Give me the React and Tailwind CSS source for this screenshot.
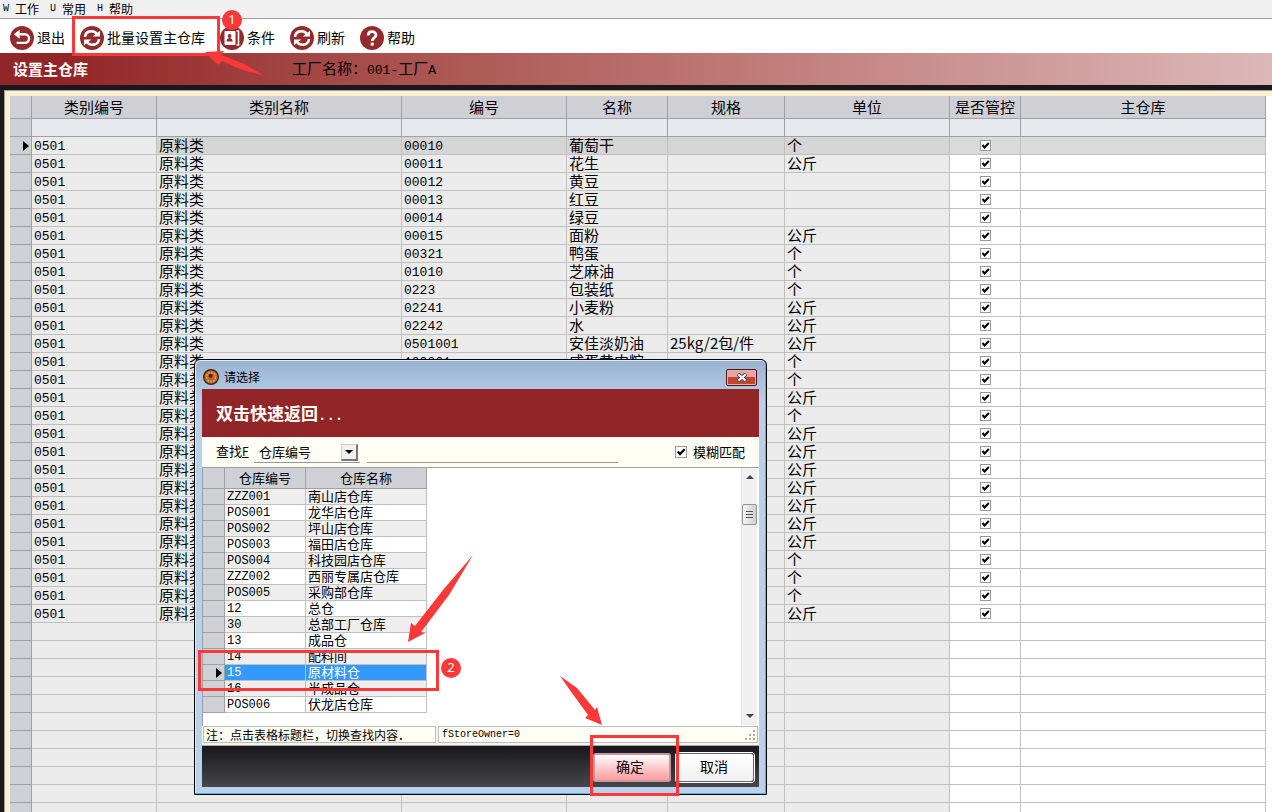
import React from 'react';

const columns = [
  { title: '类别编号', width: 'w-[125px]' },
  { title: '类别名称', width: 'w-[245px]' },
  { title: '编号', width: 'w-[165px]' },
  { title: '名称', width: 'w-[101px]' },
  { title: '规格', width: 'w-[117px]' },
  { title: '单位', width: 'w-[165px]' },
  { title: '是否管控', width: 'w-[71px]' },
  { title: '主仓库', width: '' },
];

// [编号, 名称, 规格, 单位]
const items = [
  ['00010', '葡萄干', '', '个'],
  ['00011', '花生', '', '公斤'],
  ['00012', '黄豆', '', ''],
  ['00013', '红豆', '', ''],
  ['00014', '绿豆', '', ''],
  ['00015', '面粉', '', '公斤'],
  ['00321', '鸭蛋', '', '个'],
  ['01010', '芝麻油', '', '个'],
  ['0223', '包装纸', '', '个'],
  ['02241', '小麦粉', '', '公斤'],
  ['02242', '水', '', '公斤'],
  ['0501001', '安佳淡奶油', '25kg/2包/件', '公斤'],
  ['100361', '咸蛋黄肉粽', '', '个'],
  ['', '', '', '个'],
  ['', '', '', '公斤'],
  ['', '', '', '个'],
  ['', '', '', '公斤'],
  ['', '', '', '公斤'],
  ['', '', '', '公斤'],
  ['', '', '', '公斤'],
  ['', '', '', '公斤'],
  ['', '', '', '公斤'],
  ['', '', '', '公斤'],
  ['', '', '', '个'],
  ['', '', '', '个'],
  ['', '', '', '个'],
  ['', '', '', '公斤'],
];

const emptyRows = Array.from({ length: 11 });

const warehouses = [
  ['ZZZ001', '南山店仓库'],
  ['POS001', '龙华店仓库'],
  ['POS002', '坪山店仓库'],
  ['POS003', '福田店仓库'],
  ['POS004', '科技园店仓库'],
  ['ZZZ002', '西丽专属店仓库'],
  ['POS005', '采购部仓库'],
  ['12', '总仓'],
  ['30', '总部工厂仓库'],
  ['13', '成品仓'],
  ['14', '配料间'],
  ['15', '原材料仓'],
  ['16', '半成品仓'],
  ['POS006', '伏龙店仓库'],
];

const SELECTED = '15';

const RoundIcon = ({ children }) => (
  <svg viewBox="0 0 24 24" className="h-6 w-6 shrink-0">
    <circle cx="12" cy="12" r="12" fill="#932b2d" />
    {children}
  </svg>
);

const ExitIcon = () => (
  <RoundIcon>
    <path d="M8 8.3h6.8a4.3 4.3 0 0 1 0 8.6H6.6" fill="none" stroke="#fff" strokeWidth="2.4" />
    <path d="M3.8 8.3 9.6 3.8v9z" fill="#fff" />
  </RoundIcon>
);

const RefreshIcon = () => (
  <RoundIcon>
    <path d="M5 11C5.6 4.6 13.4 3.4 17 8" fill="none" stroke="#fff" strokeWidth="2.6" />
    <path d="M12.6 10.6h7.4V4.8z" fill="#fff" />
    <path d="M19 13c-.6 6.4-8.4 7.6-12 3" fill="none" stroke="#fff" strokeWidth="2.6" />
    <path d="M11.4 13.4H4v5.8z" fill="#fff" />
  </RoundIcon>
);

const BookIcon = () => (
  <RoundIcon>
    <rect x="4.5" y="5" width="11" height="14" rx="1" fill="#fff" />
    <path d="M16.5 5h2v14h-2" fill="none" stroke="#fff" strokeWidth="1.6" />
    <circle cx="9.6" cy="10" r="1.9" fill="#932b2d" />
    <path d="M6.6 15.4c0-4.4 6-4.4 6 0z" fill="#932b2d" />
  </RoundIcon>
);

const HelpIcon = () => (
  <RoundIcon>
    <path d="M8.2 9.4c0-5 7.8-4.8 7.8-.4 0 3-3.8 2.8-3.8 6" fill="none" stroke="#fff" strokeWidth="2.8" />
    <rect x="10.7" y="16.6" width="3" height="3" fill="#fff" />
  </RoundIcon>
);

const toolbar = [
  { label: '退出', Icon: ExitIcon },
  { label: '批量设置主仓库', Icon: RefreshIcon },
  { label: '条件', Icon: BookIcon },
  { label: '刷新', Icon: RefreshIcon },
  { label: '帮助', Icon: HelpIcon },
];

const CheckBox = ({ id, label, size = 'h-[11px] w-[11px]' }) => (
  <span className={`inline-grid align-top ${size}`}>
    <input
      id={id}
      type="checkbox"
      defaultChecked
      aria-label={label}
      className={`col-start-1 row-start-1 appearance-none border border-[#999] bg-white ${size}`}
    />
    <svg viewBox="0 0 11 11" className={`pointer-events-none col-start-1 row-start-1 ${size}`}>
      <path d="M2.5 5 4.6 7.4 8.8 3" fill="none" stroke="#000" strokeWidth="2" />
    </svg>
  </span>
);

const RowPointer = () => (
  <svg viewBox="0 0 6 10" className="ml-auto mr-[2px] h-[10px] w-[6px]">
    <path d="M0 0 6 5 0 10z" fill="#000" />
  </svg>
);

const headCell = 'border-b border-r border-[#a0a0a0] bg-[#cfd0d6] px-0 pt-0 font-normal';
const cell = 'border-b border-r border-[#c0c0c0] px-[2px] py-0 whitespace-nowrap align-top';
const codeCell = 'border-b border-r border-[#c0c0c0] px-[2px] py-0 whitespace-nowrap align-bottom';
const code = "font-['Liberation_Mono','Noto_Sans_CJK_SC',monospace]";

const ItemTable = () => (
  <table className="w-full table-fixed border-separate border-spacing-0 text-[15px] leading-[15px]">
    <thead>
      <tr className="h-[23px]">
        <th className={`${headCell} w-[22px]`}></th>
        {columns.map((col) => (
          <th key={col.title} className={`${headCell} pb-[2px] ${col.width}`}>{col.title}</th>
        ))}
      </tr>
      <tr className="h-[18px]">
        <td className={headCell}></td>
        {columns.map((col) => (
          <td key={col.title} className="border-b border-r border-[#a0a0a0] bg-[#e6e9ee] p-0"></td>
        ))}
      </tr>
    </thead>
    <tbody>
      {items.map(([no, name, spec, unit], i) => {
        const gray = i === 0 ? 'bg-[#d5d5d5]' : 'bg-[#ebebeb]';
        const white = i === 0 ? 'bg-[#dadada]' : 'bg-white';
        return (
          <tr key={i} className="h-[18px]">
            <td className={headCell}>{i === 0 && <RowPointer />}</td>
            <td className={`${codeCell} ${code} bg-[#ebebeb] text-[13px]`}>0501</td>
            <td className={`${cell} ${gray}`}>原料类</td>
            <td className={`${codeCell} ${code} ${gray} text-[13px]`}>{no}</td>
            <td className={`${cell} ${gray}`}>{name}</td>
            <td className={`${cell} ${gray}`}>{spec}</td>
            <td className={`${cell} ${gray}`}>{unit}</td>
            <td className={`${cell} ${white}`}>
              <div className="flex justify-center pt-[3px]">
                <CheckBox label="是否管控" />
              </div>
            </td>
            <td className={`${cell} ${white}`}></td>
          </tr>
        );
      })}
      {emptyRows.map((_, i) => (
        <tr key={i} className="h-[18px]">
          <td className={headCell}></td>
          {columns.map((col, c) => (
            <td key={col.title} className={`${cell} ${c < 6 ? 'bg-[#ebebeb]' : 'bg-white'}`}></td>
          ))}
        </tr>
      ))}
    </tbody>
  </table>
);

const WarehouseTable = () => (
  <table className="w-[224px] table-fixed border-separate border-spacing-0 self-start text-[13px] leading-[13px]">
    <thead>
      <tr className="h-[21px]">
        <th className={`${headCell} w-[22px]`}></th>
        <th className={`${headCell} w-[81px] pb-[2px]`}>仓库编号</th>
        <th className={`${headCell} pb-[2px]`}>仓库名称</th>
      </tr>
    </thead>
    <tbody>
      {warehouses.map(([no, name], i) => {
        const selected = no === SELECTED;
        const tone = selected
          ? 'bg-[#3399ff] text-white'
          : i % 2 === 0 ? 'bg-[#eeeeee]' : 'bg-white';
        return (
          <tr key={no} className="h-4">
            <td className={headCell}>{selected && <RowPointer />}</td>
            <td className={`${codeCell} ${code} ${tone} text-[12px]`}>{no}</td>
            <td className={`${cell} ${tone}`}>{name}</td>
          </tr>
        );
      })}
    </tbody>
  </table>
);

const ScrollBar = () => (
  <div className="flex w-4 flex-col items-center border-l border-[#e4e4e4] bg-[#f0f0f0]">
    <svg viewBox="0 0 8 4" className="mt-[7px] h-1 w-2"><path d="M0 4 4 0 8 4z" fill="#444" /></svg>
    <div className="mt-[25px] flex h-[21px] w-[15px] flex-col items-center justify-center gap-[2px] rounded-xs border border-[#969696] bg-linear-to-r from-[#f6f6f6] to-[#cfcfcf]">
      <span className="h-px w-[7px] bg-[#555]"></span>
      <span className="h-px w-[7px] bg-[#555]"></span>
      <span className="h-px w-[7px] bg-[#555]"></span>
    </div>
    <svg viewBox="0 0 8 4" className="mb-[7px] mt-auto h-1 w-2"><path d="M0 0 4 4 8 0z" fill="#444" /></svg>
  </div>
);

const SelectDialog = () => (
  <div
    role="dialog"
    aria-label="请选择"
    className="absolute left-[194px] top-[359px] w-[573px] rounded-t-md border border-black bg-linear-to-b from-[#99b3d0] via-[#b9d1ea] via-10% to-[#bcd0ea] px-[7px] pb-[7px] shadow-[inset_-1px_-1px_0_#35c3e0,inset_1px_1px_0_#dfeaf6]"
  >
    <div className="flex h-[29px] items-center pr-[2px]">
      <svg viewBox="0 0 16 16" className="ml-px mt-1 h-4 w-4">
        <circle cx="8" cy="8" r="7.3" fill="#b8692a" stroke="#4a2108" strokeWidth="1.4" />
        <circle cx="8" cy="8" r="4.6" fill="none" stroke="#dca064" strokeWidth="1.6" strokeDasharray="2 1" />
        <circle cx="7.6" cy="6.8" r="2" fill="#7a0d0d" />
      </svg>
      <h2 className="ml-[5px] mt-1 text-[12px] leading-4">请选择</h2>
      <button
        aria-label="关闭"
        className="ml-auto mt-[6px] flex h-[17px] w-[31px] items-center justify-center rounded-xs border border-[#4c1420] bg-linear-to-b from-[#e9a59c] from-50% to-[#c14630] to-50% shadow-[inset_0_0_0_1px_#e8b0a8]"
      >
        <svg viewBox="0 0 12 9" className="h-[9px] w-3">
          <path d="M2 1 10 8M10 1 2 8" stroke="#4e5468" strokeWidth="4" />
          <path d="M2.5 1.5 9.5 7.5M9.5 1.5 2.5 7.5" stroke="#fff" strokeWidth="2.2" />
        </svg>
      </button>
    </div>

    <div className="flex h-12 items-center bg-[#922527] px-[14px] text-[17px] font-bold text-white">
      <p>双击快速返回<span className={`${code} text-[14px]`}>...</span></p>
    </div>

    <div className="flex h-[30px] bg-[#fffef5] pl-[14px] pr-[14px] text-[13px]">
      <label htmlFor="field" className="w-[38px] leading-[28px] whitespace-nowrap">
        查找<u className="text-[12px]">F</u>
      </label>
      <div className="grid h-[26px] w-[106px] border-b border-[#999]">
        <select id="field" className="col-start-1 row-start-1 appearance-none bg-transparent pl-[5px] pt-1">
          <option>仓库编号</option>
        </select>
        <span className="pointer-events-none col-start-1 row-start-1 mr-[2px] mt-[7px] flex h-[17px] w-[17px] items-center justify-center justify-self-end border-b-2 border-r-2 border-l border-t border-b-[#777] border-l-[#ccc] border-r-[#777] border-t-[#ccc] bg-[#f0f0f0]">
          <svg viewBox="0 0 8 4" className="h-1 w-2"><path d="M0 0 4 4 8 0z" fill="#000" /></svg>
        </span>
      </div>
      <input type="text" aria-label="查找内容" className="ml-[7px] h-[26px] w-[251px] border-b border-[#999] bg-transparent" />
      <label htmlFor="fuzzy" className="ml-auto flex items-center gap-[6px]">
        <CheckBox id="fuzzy" size="h-3 w-3" />
        模糊匹配
      </label>
    </div>

    <div className="flex h-[259px] justify-between border-l border-t border-[#a0a0a0] bg-white pb-px pr-[2px]">
      <WarehouseTable />
      <ScrollBar />
    </div>

    <div className="flex h-5 gap-[2px] border-b border-[#aaa] bg-[#f6f5ec] pb-[2px] pl-px pr-px text-[12px] leading-[15px]">
      <div className="w-[233px] border border-[#bbb] bg-[#fffef5] px-[2px] whitespace-nowrap">
        注：点击表格标题栏，切换查找内容．
      </div>
      <div className={`${code} flex flex-1 items-end justify-between border border-[#bbb] bg-[#fffef5] pl-[3px] text-[10px]`}>
        <span>fStoreOwner=0</span>
        <svg viewBox="0 0 12 12" className="mb-px mr-px h-3 w-3" fill="#aaa">
          <path d="M9 1h2v2H9zM5 5h2v2H5zM9 5h2v2H9zM1 9h2v2H1zM5 9h2v2H5zM9 9h2v2H9z" />
        </svg>
      </div>
    </div>

    <div className="flex h-[41px] justify-end gap-[5px] bg-linear-to-b from-[#1a181d] to-[#46474c] pr-[5px] pt-[7px] text-[14px]">
      <button className="h-[29px] w-[78px] rounded-[3px] border-2 border-[#c9989c] bg-linear-to-b from-white via-[#ffc9cd] to-[#ff9ba0] pb-[2px] pr-1">
        确定
      </button>
      <button className="h-[29px] w-[78px] rounded-[3px] border border-[#666] bg-linear-to-b from-white to-[#f0f0f0] pb-[2px] pr-[2px] shadow-[0_0_0_1px_#fff]">
        取消
      </button>
    </div>
  </div>
);

// Step markers drawn over the windows
const Annotations = () => (
  <div className="pointer-events-none absolute inset-0 text-white">
    <div className="absolute left-[72px] top-[16px] h-10 w-[148px] border-3 border-[#fd3838]"></div>
    <div className="absolute left-[198px] top-[650px] h-[41px] w-[241px] border-3 border-[#fd3838]"></div>
    <div className="absolute left-[590px] top-[735px] h-[61px] w-[89px] border-3 border-[#fd3838]"></div>
    <svg viewBox="0 0 1272 812" className="absolute left-0 top-0 h-[812px] w-[1272px]" fill="#fd3838">
      <path d="M205 52 224 51 221 55 244 64 265 76 240 69 222 61 218 65z" />
      <path d="M408 642 411 623 415 626 443 590 473 555 449 595 421 632 425 633z" />
      <path d="M602 725 585 718 588 715 572 693 560 676 577 688 595 710 597 707z" />
    </svg>
    <div className="absolute left-[222px] top-[10px] flex h-5 w-5 items-center justify-center rounded-full bg-[#fd3838] font-['Noto_Sans',sans-serif] text-[13px]">1</div>
    <div className="absolute left-[441px] top-[658px] flex h-5 w-5 items-center justify-center rounded-full bg-[#fd3838] font-['Noto_Sans',sans-serif] text-[13px]">2</div>
  </div>
);

const App = () => {
  return (
    <div className="relative flex h-screen flex-col overflow-hidden bg-white font-['Noto_Sans_CJK_SC',sans-serif] text-black">
      <nav className="flex h-[19px] shrink-0 gap-[11px] border-b border-[#a0a0a0] bg-[#f0f0f0] pl-[3px] text-[12px] leading-[18px]">
        {[['W', '工作'], ['U', '常用'], ['H', '帮助']].map(([key, label]) => (
          <button key={key} className="flex gap-[6px]">
            <span className={`${code} w-[6px] text-[10px]`}>{key}</span>
            {label}
          </button>
        ))}
      </nav>

      <div className="flex h-[34px] shrink-0 items-center gap-[15px] pl-[10px] pt-1 text-[14px]">
        {toolbar.map(({ label, Icon }) => (
          <button key={label} className="flex items-center gap-[3px] whitespace-nowrap">
            <Icon />
            <span className="pb-[2px]">{label}</span>
          </button>
        ))}
      </div>

      <header className="flex h-8 shrink-0 items-center bg-linear-to-r from-[#922527] from-5% to-[#dcb8b9] pl-[13px] text-[15px]">
        <h1 className="w-[279px] font-bold text-white">设置主仓库</h1>
        <div className="pb-px">
          工厂名称：<span className={`${code} text-[13px]`}>001-</span>工厂<span className={`${code} text-[13px]`}>A</span>
        </div>
      </header>

      <main className="flex-1 overflow-hidden border-l-4 border-t-5 border-[#1a181d]">
        <div className="h-full overflow-hidden border-l border-t border-[#a0a0a0] bg-[#fff0d2] pl-[5px] pt-[5px]">
          <div className="bg-white pr-[6px]">
            <ItemTable />
          </div>
        </div>
      </main>

      <SelectDialog />
      <Annotations />
    </div>
  );
};

export default App;
